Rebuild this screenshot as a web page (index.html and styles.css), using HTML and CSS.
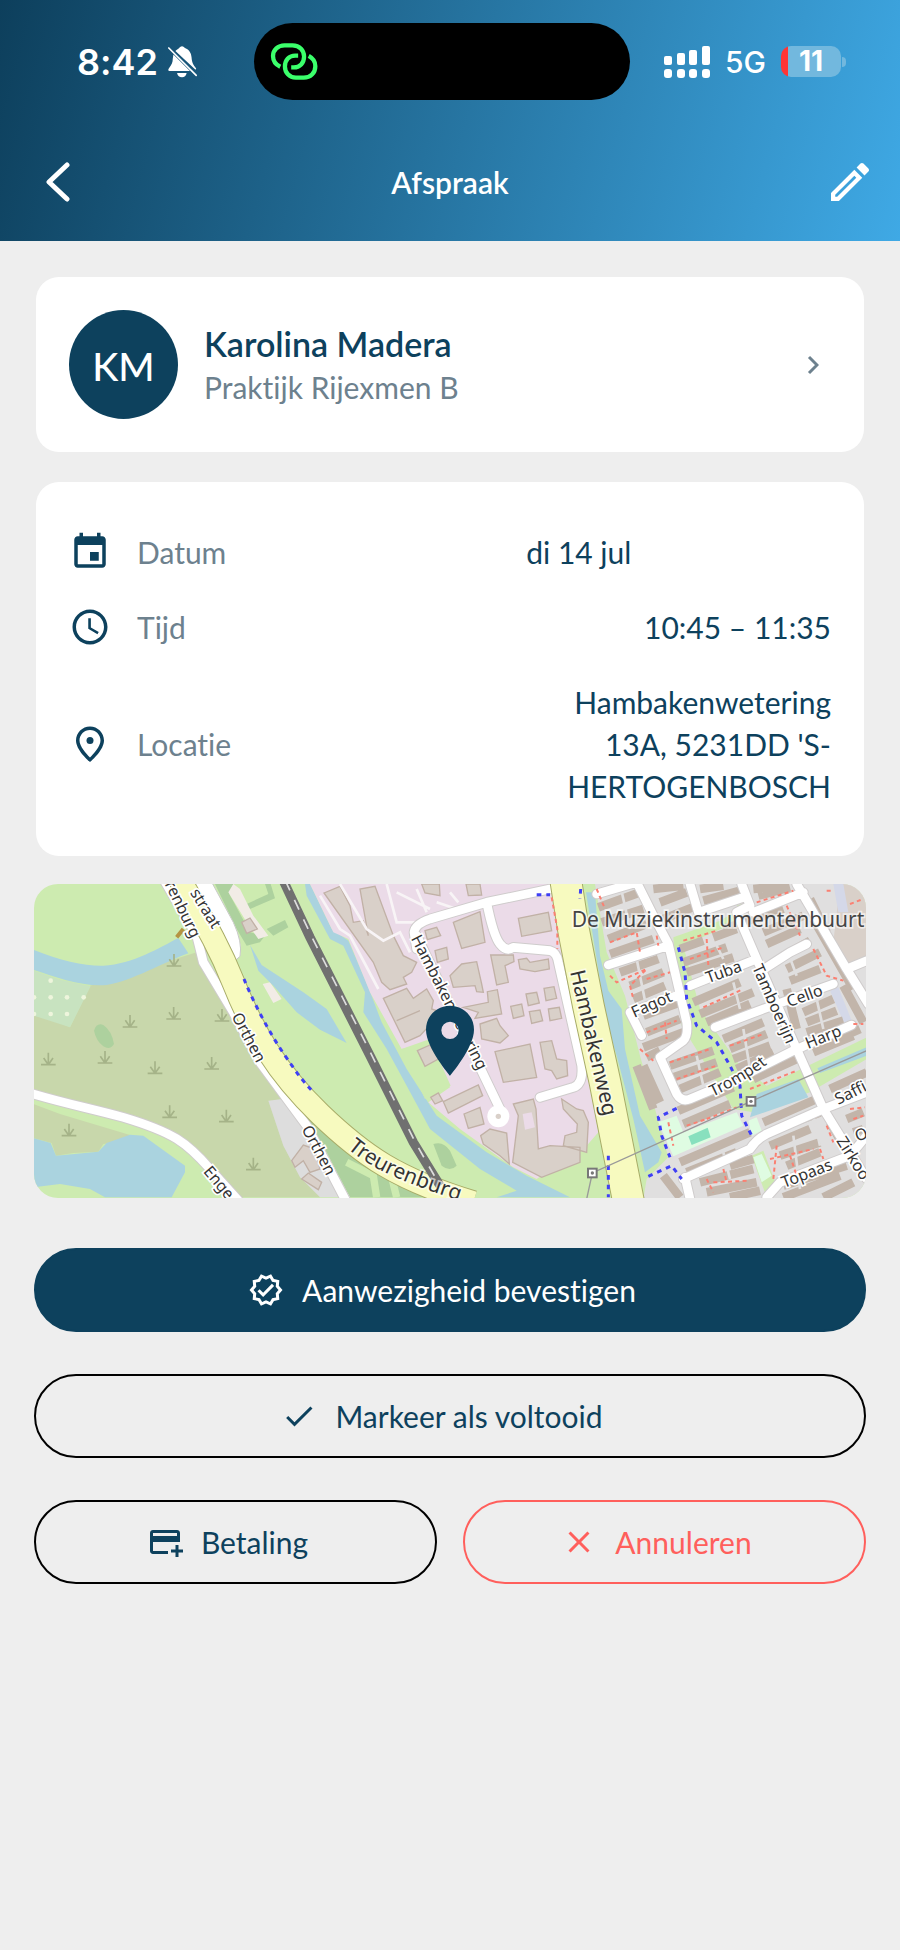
FILE: index.html
```html
<!DOCTYPE html>
<html lang="nl">
<head>
    <meta charset="UTF-8">
    <meta name="viewport" content="width=device-width, initial-scale=1.0">
    <title>Afspraak</title>
    <link rel="stylesheet" href="styles.css">
</head>
<body>
    <header class="header">
        <div class="status-bar">
            <div class="status-left">
                <span class="time">8:42</span>
                <svg class="bell" viewBox="500 134 93 100" fill="#fff">
                    <path d="M525 152C530 147 534 146 536 143Q545 132 554 143C567 148 573 158 574 172C575 186 578 193 588 205L586 209Z"/>
                    <path d="M519 163L569 213H507Q501 212 505 205C514 194 517 187 517 176Z"/>
                    <path d="M530 219H559Q556 232 545 232Q533 232 530 219Z"/>
                    <path d="M505 143L588 226" stroke="#fff" stroke-width="5" stroke-linecap="round"/>
                </svg>
            </div>
            <div class="island">
                <svg class="hotspot" viewBox="812 126 148 118" fill="none" stroke="#3bff6b" stroke-width="13">
                    <path d="M843 201C827 193 821 182 821 168C821 150 836 136 856 136H880C902 136 915 152 915 170C915 190 902 203 884 203H876"/>
                    <path d="M929 168C942 175 949 186 949 199C949 220 934 234 914 234H890C870 234 857 218 857 200C857 180 870 167 888 167H897"/>
                </svg>
            </div>
            <div class="status-right">
                <svg class="signal" viewBox="0 0 46 32" fill="#fff">
                    <rect x="0" y="10" width="8" height="9" rx="2"/><rect x="0" y="23" width="8" height="9" rx="3"/>
                    <rect x="13" y="7" width="8" height="12" rx="2"/><rect x="13" y="23" width="8" height="9" rx="3"/>
                    <rect x="25" y="4" width="8" height="15" rx="2"/><rect x="25" y="23" width="8" height="9" rx="3"/>
                    <rect x="38" y="0" width="8" height="19" rx="2"/><rect x="38" y="23" width="8" height="9" rx="3"/>
                </svg>
                <span class="network">5G</span>
                <div class="battery-wrap">
                    <span class="battery">11</span>
                    <span class="battery-tip"></span>
                </div>
            </div>
        </div>
        <nav class="nav-bar">
            <button class="icon-button" aria-label="Terug">
                <svg class="back-icon" viewBox="0 0 24 40" fill="none" stroke="#fff" stroke-width="5" stroke-linecap="round" stroke-linejoin="round">
                    <path d="M21 3L3 20L21 37"/>
                </svg>
            </button>
            <h1>Afspraak</h1>
            <button class="icon-button" aria-label="Bewerken">
                <svg class="edit-icon" viewBox="3 3 18 18" fill="#fff">
                    <path d="M14.06 9.02l.92.92L5.92 19H5v-.92l9.06-9.06M17.66 3c-.25 0-.51.1-.7.29l-1.83 1.83 3.75 3.75 1.83-1.83c.39-.39.39-1.02 0-1.41l-2.34-2.34c-.2-.2-.45-.29-.71-.29zm-3.6 3.19L3 17.25V21h3.75L17.81 9.94l-3.75-3.75z"/>
                </svg>
            </button>
        </nav>
    </header>

    <main class="content">
        <a class="card person" href="#">
            <span class="avatar">KM</span>
            <span class="person-text">
                <span class="person-name">Karolina Madera</span>
                <span class="person-type">Praktijk Rijexmen B</span>
            </span>
            <svg class="chevron" viewBox="0 0 12 20" fill="none" stroke="#6d818e" stroke-width="3">
                <path d="M2 2L10 10L2 18"/>
            </svg>
        </a>

        <dl class="card details">
            <div class="detail-row">
                <dt>
                    <svg class="detail-icon" viewBox="0 0 24 24"><path d="M19 3h-1V1h-2v2H8V1H6v2H5c-1.11 0-1.99.9-1.99 2L3 19c0 1.1.89 2 2 2h14c1.1 0 2-.9 2-2V5c0-1.1-.9-2-2-2zm0 16H5V8h14v11zM12 12h5v5h-5z"/></svg>
                    Datum
                </dt>
                <dd class="value-start">di 14 jul</dd>
            </div>
            <div class="detail-row">
                <dt>
                    <svg class="detail-icon" viewBox="0 0 24 24"><path d="M11.99 2C6.47 2 2 6.48 2 12s4.47 10 9.99 10C17.52 22 22 17.52 22 12S17.52 2 11.99 2zM12 20c-4.42 0-8-3.58-8-8s3.58-8 8-8 8 3.58 8 8-3.58 8-8 8zm.5-13H11v6l5.25 3.15.75-1.23-4.5-2.67z"/></svg>
                    Tijd
                </dt>
                <dd>10:45 – 11:35</dd>
            </div>
            <div class="detail-row">
                <dt>
                    <svg class="detail-icon" viewBox="0 0 24 24"><path d="M12 2C7.6 2 4 5.6 4 10c0 5.4 7.05 11.5 7.35 11.76L12 22.3l.65-.54C12.95 21.5 20 15.4 20 10c0-4.4-3.6-8-8-8zm0 17.65c-2.13-2-6-6.31-6-9.65 0-3.31 2.69-6 6-6s6 2.69 6 6c0 3.34-3.87 7.66-6 9.65z"/><circle cx="12" cy="10" r="2"/></svg>
                    Locatie
                </dt>
                <dd>Hambakenwetering 13A, 5231DD 'S-HERTOGENBOSCH</dd>
            </div>
        </dl>

        <div class="map-box">
            <svg class="map" viewBox="42 45 2496 942" preserveAspectRatio="xMidYMid slice">
                <defs>
                    <g id="grass" fill="none" stroke="#a5b388" stroke-width="5">
                        <path d="M-22 16H22M0 16V-20M0 16L-14 -4M0 16L14 -4"/>
                    </g>
                    <g id="tower">
                        <rect x="-13" y="-13" width="26" height="26" fill="#fff" stroke="#777" stroke-width="6"/>
                        <circle r="5" fill="#777"/>
                    </g>
                    <g id="streets">
                        <path d="M1730 75L1850 40L1900 140L1945 225L2000 460Q2005 500 1990 515L1920 565L1970 675Q1985 700 2010 690L2130 640L2320 545L2495 468M1765 288L1945 230M2010 45L2035 130L2170 85M2165 45L2190 110L2150 130L2210 270L2330 540L2410 720L2540 930M2200 130L2350 70M2330 45L2480 300L2545 405M2480 300L2540 275M2010 350L2210 270M2240 295L2310 250L2360 225M2085 475L2230 420L2440 345M1830 430L1865 500M1830 430L1970 380M1990 930L2190 840Q2210 810 2240 795L2410 720L2540 670M1995 925L2010 990M2240 985L2280 940L2490 860L2540 800"/>
                        <path d="M1190 240L1182 190Q1185 165 1230 150L1400 100L1590 60M1400 100Q1420 200 1440 225T1480 235L1590 245Q1610 250 1615 280L1685 590Q1690 645 1660 655L1560 685M1190 200L1440 720"/>
                        <path d="M430 30L530 200L550 280L640 430L720 580L860 770L980 1000"/>
                        <path d="M30 672C140 705 200 715 310 745C460 790 500 820 570 900L660 1000"/>
                    </g>
                    <path id="treurenburg" d="M982 838C1080 920 1190 950 1360 1010"/>
                    <path id="trompet" d="M2078 683Q2190 630 2260 570"/>
                </defs>
                <rect x="0" y="0" width="2600" height="1100" fill="#cdebb0"/>

                <!-- heath and orchard -->
                <path fill="#c8d7ab" d="M42 430L150 475L210 350L530 250L640 430L740 600L860 770L900 985H640L560 890L440 790L310 745L42 670Z"/>
                <path fill="#c8d7ab" d="M42 706L120 735L330 798L290 820L250 825L235 848L160 852L108 860L95 822L42 808Z"/>
                <path fill="#c8e3c0" d="M42 305L120 332L212 352L150 475L42 440Z"/>
                <g fill="#eef5dc">
                    <circle cx="92" cy="335" r="7"/><circle cx="42" cy="385" r="7"/><circle cx="92" cy="385" r="7"/><circle cx="141" cy="385" r="7"/>
                    <circle cx="191" cy="385" r="7"/><circle cx="42" cy="435" r="7"/><circle cx="92" cy="435" r="7"/><circle cx="141" cy="435" r="7"/>
                </g>
                <path fill="#add19e" d="M222 485Q230 460 250 468Q275 485 282 525Q270 545 250 532Q228 515 222 485Z"/>
                <path fill="#add19e" d="M585 45H640L628 75L690 190L735 200L720 220L680 230L650 180ZM680 105L745 75L735 45H752L765 88L690 120ZM740 180L795 153L805 175L760 200Z"/>
                <path fill="#add19e" d="M835 710L900 770L1010 850L1130 900L1230 940L1270 985H990L920 850ZM1240 825Q1270 815 1290 845L1310 890Q1290 910 1265 890Z"/>
                <path fill="none" stroke="#cdebb0" stroke-width="22" d="M980 880L1060 920L1070 985M1110 905L1130 985"/>
                <path fill="#f2ece6" d="M640 45L625 70L680 160L715 210L745 200L700 140L660 60ZM728 345L750 340L785 390L760 402Z"/>
                <path fill="#ddd" d="M745 695L805 688L850 780L920 860L990 985H900L840 925L790 830Z"/>

                <!-- water -->
                <g fill="#aad3df">
                    <path d="M42 243C120 275 200 292 250 290C340 285 420 235 475 207L505 253C430 280 340 335 260 348C190 355 110 325 42 303Z"/>
                    <path d="M42 808L92 822L108 860L235 848L260 822L330 797L370 800L495 890V910L455 985H255L210 960L120 945L42 955Z"/>
                    <path d="M690 228L725 288L850 370L920 420L980 522L900 482L830 430L760 350L715 305Z"/>
                    <path d="M855 45H870L935 180L985 215L1045 355L1085 460L1160 600L1250 740L1400 850L1520 920L1650 985H1430L1490 965L1380 900L1230 780L1160 650L1100 540L1030 430L1035 370L970 230L930 210L860 80Z"/>
                </g>

                <!-- industrial area -->
                <path fill="#ebdbe8" d="M870 45H1600L1735 790L1700 830L1550 930L1480 895L1320 780L1225 700L1290 655L1225 520L1145 540L1050 370L985 210L940 190Z"/>
                <path fill="#cdebb0" d="M1145 540L1230 510L1292 650L1215 690Z"/>
                <g fill="#d9d0c9" stroke="#c1b1a6" stroke-width="4">
                    <path d="M912 72L960 52L990 110L1000 160L1030 155L1045 200L1020 60L1065 52L1120 200L1150 260L1190 280L1175 310L1150 325L1160 345L1110 362L1085 340L1060 280Z"/>
                    <path d="M1090 388L1160 358L1180 388L1220 360L1240 395L1235 420L1265 430L1200 500L1155 520Z"/>
                    <path d="M1130 455L1200 425M1205 45H1258L1260 80L1215 72ZM1338 45H1380L1385 78L1345 80Z"/>
                    <path d="M1215 185L1250 175L1262 200L1222 212ZM1245 245L1280 235L1285 270L1252 280ZM1300 160L1380 128L1395 220L1325 238ZM1495 148L1585 130L1595 185L1505 202Z"/>
                    <path d="M1290 320L1325 285L1370 278L1385 345L1390 370L1370 368L1365 350L1300 355ZM1412 258H1480L1482 278L1455 290L1465 340L1430 348ZM1495 272L1520 268L1530 280L1585 270L1588 300L1545 308L1500 300Z"/>
                    <path d="M1330 415L1405 400L1402 368L1432 362L1445 435L1365 448L1375 430ZM1380 465L1430 448L1440 470L1465 500L1440 522L1385 510ZM1425 548L1530 525L1550 625L1450 640ZM1560 520L1595 515L1610 570L1640 575L1643 620L1610 630L1595 605L1575 600Z"/>
                    <path d="M1472 412L1505 405L1512 440L1480 448ZM1518 375L1550 370L1558 402L1525 410ZM1572 358L1602 353L1610 388L1578 395ZM1528 428L1560 423L1568 455L1535 463ZM1585 420L1618 415L1625 448L1590 455Z"/>
                    <path d="M1192 545L1230 528L1255 570L1215 592ZM1232 685L1255 672L1268 695L1245 705ZM1270 698L1375 648L1388 680L1285 732ZM1332 735L1380 715L1392 765L1345 778ZM1382 800L1410 780L1460 792L1468 885L1440 860L1390 825Z"/>
                    <path d="M1480 705L1540 690L1548 720L1555 840L1590 830L1680 835V880L1565 925L1478 880L1495 740ZM1625 690L1670 720L1690 725L1705 760L1700 850L1630 830L1635 800L1670 790L1672 765L1630 720Z"/>
                    <path d="M815 875L850 828L885 840L900 900L870 910L850 875L825 895ZM845 930L865 912L905 940L895 962Z"/>
                    <path d="M665 160L690 147L712 180L680 193Z"/>
                </g>
                <path fill="#ebdbe8" d="M1508 735L1535 730L1545 775L1515 782Z"/>
                <path class="path-thin" d="M900 80L960 180L990 200L1075 360M960 45L1040 180L1090 215L1140 190L1170 250M1100 45L1130 160L1210 160M1130 70L1230 120M1190 60L1220 130M1250 100L1310 120M1290 70L1315 100"/>

                <!-- residential area -->
                <path fill="#e0dfdf" d="M1725 45H2540V990H1870L1880 930L1945 865L1905 720L1860 560L1815 380L1760 250Z"/>
                <path fill="#aad3df" d="M1698 70H1725L1740 260L1765 365L1805 420L1815 540L1860 740L1925 850L1915 880L1875 910L1840 750L1790 560L1760 460Z"/>
                <path fill="#d9d0c9" d="M2460 45H2540V270L2475 300L2440 220Z"/>
                <path fill="#d4d8e8" d="M2440 45H2470L2485 130H2455ZM2430 365L2455 355L2495 455L2475 468Z"/>
                <path fill="#cdebb0" d="M1960 205L2100 155L2150 125L2170 150L1990 230L2040 420L2160 590L2240 650L2540 505V570L2370 670L2200 730L2140 720L1985 470L1965 300ZM2150 110L2180 98L2190 125L2165 135ZM2195 860L2230 845L2270 950L2240 985Z"/>
                <path fill="#aad3df" d="M2210 675L2335 630L2365 685L2190 745ZM2392 598L2540 535V560L2400 612Z"/>
                <path fill="#dffce2" d="M1915 760L1970 740L1990 790L2150 730L2170 770L1960 862ZM2185 755L2210 745L2225 785L2195 800ZM2200 865L2225 855L2255 920L2225 940Z"/>
                <path fill="#88e0be" d="M2005 802L2063 776L2072 805L2015 828Z"/>

                <g class="terrace">
                    <path d="M1735 115L1860 70M1745 160L1870 120M1765 210L1880 165M1770 255L1900 210M1800 310L1915 270M1830 350L1930 310M1840 390L1935 350"/>
                    <path d="M1900 60L1990 50M1920 100L2000 70M1930 150L2030 110M1870 440L1980 400M1880 490L1980 450M1870 535L1990 490M1880 565L1920 545"/>
                    <path d="M2040 60L2110 50M2050 95L2160 65M2060 120L2170 80M2110 180L2290 120M2200 60L2300 50M2215 80L2310 55M2230 190L2350 140M2240 225L2340 180"/>
                    <path d="M1980 240L2050 215M2080 205L2150 180M1990 280L2120 235M2000 310L2140 265M2020 400L2160 340M2040 435L2200 370M2060 460L2190 405"/>
                    <path d="M2110 510L2230 460M2130 540L2240 495M2140 570L2250 530M2150 600L2260 550M2200 630L2330 570M1950 590L2080 545M1960 625L2090 580M1980 660L2100 610"/>
                    <path d="M1870 590L1920 700M1850 590L1900 720M1975 725L2140 655M1990 765L2130 705M1980 880L2190 790M2000 910L2150 850M2270 780L2400 730M2230 760L2390 690"/>
                    <path d="M2290 260L2370 215M2300 300L2400 250M2310 335L2400 300M2350 430L2440 390M2360 460L2450 425M2360 490L2470 455M2430 520L2520 480M2380 550L2500 500M2300 360L2330 480M2240 330L2300 480"/>
                    <path d="M2380 150L2500 360M2370 90L2420 190M2470 350L2530 460M2250 830L2370 780M2280 860L2400 820M2300 890L2400 850M2130 890L2200 870M2040 940L2200 900M2060 970L2210 940M2130 985L2220 965M1930 920L1980 985M2290 950L2480 890M2290 985L2460 920M2410 985L2500 940M2430 660L2540 610M2430 760L2470 830M2480 750L2530 730M2500 790L2530 780"/>
                </g>
                <path class="terrace-gap" d="M1800 45L1830 180M1850 270L1880 420M2010 50L2040 120M2090 230L2110 270M2140 340L2160 420M2170 480L2190 600M2030 560L2050 650M2300 240L2330 320M2390 390L2410 480M2380 740L2400 830M2110 850L2130 930M2320 800L2340 960"/>

                <use class="street-case" href="#streets"/>
                <use class="street" href="#streets"/>
                <circle cx="1435" cy="742" r="33" fill="#fff"/>
                <circle cx="1435" cy="742" r="8" fill="#d9d0c9"/>
                <path fill="#fff" stroke="#c9c9c9" stroke-width="3" d="M500 30H570L640 160Q668 220 660 262L645 275L600 200Z"/>

                <!-- main roads -->
                <path class="road-case" d="M468 10C520 110 580 190 640 340S770 610 900 735S1130 930 1360 1000"/>
                <path class="road" d="M468 10C520 110 580 190 640 340S770 610 900 735S1130 930 1360 1000"/>
                <path class="avenue-case" d="M1632 0L1660 180L1705 410L1755 640L1830 1020"/>
                <path class="avenue" d="M1632 0L1660 180L1705 410L1755 640L1830 1020"/>
                <path fill="none" stroke="#b59442" stroke-width="12" d="M470 205L490 180"/>

                <!-- railway -->
                <path fill="none" stroke="#707070" stroke-width="28" d="M790 35L870 205L1050 560L1180 820L1260 950"/>
                <path fill="none" stroke="#ddd" stroke-width="5" stroke-dasharray="32 32" d="M796 35L876 205L1056 560L1186 820L1260 950"/>

                <!-- cycle and foot paths -->
                <path class="cycle" d="M672 330C700 400 750 495 795 560S840 625 880 670"/>
                <path class="cycle" d="M1975 235L1995 310L2000 390L2030 470L2090 520L2130 590L2160 650L2165 740L2200 810M1970 718L1915 745L1925 800L1950 865M1885 922L1955 890L1985 930M1765 860V985M1550 77H1590M1682 60L1680 90"/>
                <path class="foot" d="M1595 85L1612 180L1612 240M1730 60L1755 120M1770 220L1850 190L1860 250M1910 200L1915 230M1770 320L1790 340L1880 300L1830 350L1840 390M1880 330L1950 310M1990 215L2090 185M2010 270L2110 235M2060 210L2065 290M2050 415L2170 360M2130 530L2230 495M1880 490L1970 455M1935 460L1940 510M1860 540L1900 575M1950 580L2070 540M1970 630L2090 590M2210 100L2320 65M2300 110L2340 200M2380 240L2420 320L2470 335M2190 660L2330 605M2060 750L2150 715M1945 760L1960 830M2000 770L2060 750M2080 940L2190 935M2110 900L2120 940M2270 830L2260 930M2250 870L2380 840M2310 860L2330 920M2400 840L2410 870M2060 930L2080 970M2490 105L2530 90M2420 65H2440M2500 465H2530M2490 720L2535 715M2500 750L2530 740M2420 770L2440 820"/>

                <path fill="none" stroke="#999" stroke-width="4" d="M1700 990L1717 912L2193 697L2540 545"/>
                <use href="#tower" x="1717" y="912"/>
                <use href="#tower" x="2193" y="697"/>

                <use href="#grass" x="462" y="275"/>
                <use href="#grass" x="330" y="458"/>
                <use href="#grass" x="461" y="434"/>
                <use href="#grass" x="606" y="440"/>
                <use href="#grass" x="85" y="571"/>
                <use href="#grass" x="255" y="566"/>
                <use href="#grass" x="405" y="597"/>
                <use href="#grass" x="575" y="584"/>
                <use href="#grass" x="449" y="729"/>
                <use href="#grass" x="619" y="742"/>
                <use href="#grass" x="147" y="784"/>
                <use href="#grass" x="700" y="886"/>

                <g class="map-label">
                    <text transform="translate(514 210) rotate(64)" text-anchor="end">renburg</text>
                    <text transform="translate(578 182) rotate(58)" text-anchor="end">straat</text>
                    <text transform="translate(634 442) rotate(62)">Orthen</text>
                    <text transform="translate(844 780) rotate(62)">Orthen</text>
                    <text transform="translate(548 908) rotate(50)">Enge</text>
                    <text transform="translate(1172 208) rotate(63)">Hambakenwetering</text>
                    <text transform="translate(2065 343) rotate(-20)">Tuba</text>
                    <text transform="translate(2307 415) rotate(-20)">Cello</text>
                    <text transform="translate(2364 540) rotate(-22)">Harp</text>
                    <text transform="translate(1843 447) rotate(-24)">Fagot</text>
                    <text transform="translate(2196 295) rotate(66)">Tamboerijn</text>
                    <text transform="translate(2455 708) rotate(-27)">Saffi</text>
                    <text transform="translate(2292 957) rotate(-21)">Topaas</text>
                    <text transform="translate(2448 815) rotate(58)">Zirkoo</text>
                    <text transform="translate(2512 818) rotate(-20)">O</text>
                    <text><textPath href="#trompet">Trompet</textPath></text>
                </g>
                <g class="map-label-large">
                    <text><textPath href="#treurenburg">Treurenburg</textPath></text>
                    <text transform="translate(1650 308) rotate(77)">Hambakenweg</text>
                    <text class="district" x="1655" y="175">De Muziekinstrumentenbuurt</text>
                </g>

                <path fill="#0d415d" fill-rule="evenodd" d="M1290 410C1249 410 1218 442 1218 482C1218 536 1290 620 1290 620S1362 536 1362 482C1362 442 1331 410 1290 410ZM1290 458A26 26 0 1 1 1290 510A26 26 0 1 1 1290 458Z"/>
            </svg>
        </div>

        <div class="actions">
            <button class="btn btn-primary">
                <svg class="btn-icon" viewBox="0 0 24 24"><path d="M23 11.99l-2.44-2.79.34-3.69-3.61-.82L15.4 1.5 12 2.96 8.6 1.5 6.71 4.69 3.1 5.5l.34 3.7L1 11.99l2.44 2.79-.34 3.7 3.61.82 1.89 3.2 3.4-1.47 3.4 1.46 1.89-3.19 3.61-.82-.34-3.69L23 11.99zm-3.95 1.48l-.56.65.08.85.18 1.95-1.9.43-.84.19-.44.74-.99 1.68-1.78-.77-.8-.34-.79.34-1.78.77-.99-1.67-.44-.74-.84-.19-1.9-.43.18-1.96.08-.85-.56-.65-1.29-1.47 1.29-1.48.56-.65-.09-.86-.18-1.94 1.9-.43.84-.19.44-.74.99-1.68 1.78.77.8.34.79-.34 1.78-.77.99 1.68.44.74.84.19 1.9.43-.18 1.95-.08.85.56.65 1.29 1.47-1.28 1.48zM10.09 13.75l-2.32-2.33-1.48 1.49 3.8 3.81 7.34-7.36-1.48-1.49z"/></svg>
                Aanwezigheid bevestigen
            </button>
            <button class="btn">
                <svg class="btn-icon" viewBox="0 0 24 24"><path d="M9 16.17L4.83 12l-1.42 1.41L9 19 21 7l-1.41-1.41z"/></svg>
                Markeer als voltooid
            </button>
            <div class="btn-row">
                <button class="btn">
                    <svg class="btn-icon" viewBox="0 0 24 24"><path d="M20 4H4c-1.11 0-1.99.89-1.99 2L2 18c0 1.11.89 2 2 2h10v-2H4v-6h18V6c0-1.11-.89-2-2-2zm0 4H4V6h16v2zm4 9v2h-3v3h-2v-3h-3v-2h3v-3h2v3h3z"/></svg>
                    Betaling
                </button>
                <button class="btn btn-danger">
                    <svg class="btn-icon" viewBox="0 0 24 24"><path d="M19 6.41L17.59 5 12 10.59 6.41 5 5 6.41 10.59 12 5 17.59 6.41 19 12 13.41 17.59 19 19 17.59 13.41 12z"/></svg>
                    Annuleren
                </button>
            </div>
        </div>
    </main>
</body>
</html>
```
FILE: styles.css
```css
* {
    box-sizing: border-box;
}
body {
    margin: 0;
    min-height: 100vh;
    background-color: #eeeeee;
    color: #0d415d;
    font-family: Lato, sans-serif;
    font-size: 30px;
    font-variant-ligatures: none;
    line-height: 42px;
}
button {
    font: inherit;
    font-variant-ligatures: none;
    cursor: pointer;
}

/* header */
.header {
    background: linear-gradient(105deg, #0d3f5c, #3fa9e5);
    color: #ffffff;
    padding: 23px 31px;
}
.status-bar {
    display: grid;
    grid-template-columns: 1fr 376px 1fr;
    align-items: center;
    padding-right: 16px;
    font-family: Inter, sans-serif;
}
.status-left {
    display: flex;
    align-items: center;
    gap: 9px;
    padding-left: 46px;
}
.time {
    font-size: 36px;
    font-weight: 600;
}
.bell {
    width: 31px;
    height: 33px;
}
.island {
    display: flex;
    align-items: center;
    height: 77px;
    padding-left: 16px;
    border-radius: 39px;
    background-color: #000000;
}
.hotspot {
    width: 49px;
    height: 39px;
}
.status-right {
    display: flex;
    align-items: center;
    justify-content: flex-end;
    gap: 15px;
    padding-right: 7px;
}
.signal {
    width: 46px;
    height: 32px;
}
.network {
    font-weight: 500;
}
.battery-wrap {
    display: flex;
    align-items: center;
    gap: 1px;
}
.battery {
    width: 60px;
    height: 31px;
    border-radius: 10px;
    background: linear-gradient(90deg, #ff3535 7px, #72b8de 7px);
    font-size: 28px;
    font-weight: 700;
    line-height: 31px;
    text-align: center;
}
.battery-tip {
    width: 4px;
    height: 10px;
    border-radius: 0 4px 4px 0;
    background-color: #72b8de;
}
.nav-bar {
    display: flex;
    align-items: center;
    justify-content: space-between;
    margin-top: 46px;
}
.nav-bar h1 {
    margin: 0;
    font-size: 30px;
    font-weight: 600;
}
.icon-button {
    display: flex;
    align-items: center;
    justify-content: center;
    width: 54px;
    height: 72px;
    padding: 0;
    border: none;
    background: none;
}
.icon-button:first-child {
    justify-content: flex-start;
    padding-left: 15px;
}
.icon-button:last-child {
    justify-content: flex-end;
}
.back-icon {
    width: 24px;
    height: 40px;
}
.edit-icon {
    width: 38px;
    height: 38px;
}

/* cards */
.content {
    padding: 36px 34px;
}
.card {
    margin: 0 2px;
    padding: 33px;
    border-radius: 23px;
    background-color: #ffffff;
}
.person {
    display: flex;
    align-items: center;
    gap: 26px;
    color: inherit;
    text-decoration: none;
}
.avatar {
    width: 109px;
    height: 109px;
    border-radius: 50%;
    background-color: #0d415d;
    color: #ffffff;
    font-size: 39px;
    font-weight: 500;
    line-height: 112px;
    text-align: center;
}
.person-text {
    display: flex;
    flex: 1;
    flex-direction: column;
}
.person-name {
    font-size: 34px;
    font-weight: 600;
    line-height: 44px;
}
.person-type {
    color: #6d818e;
}
.chevron {
    width: 12px;
    height: 20px;
    margin-right: 12px;
}
.details {
    display: flex;
    flex-direction: column;
    gap: 33px;
    margin-top: 30px;
    padding: 49px 33px;
}
.detail-row {
    display: flex;
    align-items: center;
    justify-content: space-between;
}
.detail-row dt {
    display: flex;
    align-items: center;
    gap: 26px;
    color: #6d818e;
}
.detail-row dd {
    width: 40%;
    margin: 0;
    text-align: right;
}
.detail-row .value-start {
    text-align: left;
}
.detail-icon {
    width: 42px;
    height: 42px;
    fill: #0d415d;
}

/* map */
.map-box {
    margin-top: 28px;
    border-radius: 24px;
    overflow: hidden;
}
.map {
    display: block;
    width: 100%;
    height: 314px;
}
.map-label {
    font-family: "Noto Sans", sans-serif;
    font-size: 48px;
    fill: #333333;
    stroke: #ffffff;
    stroke-width: 10px;
    paint-order: stroke;
}
.map-label-large {
    font-family: "Noto Sans", sans-serif;
    font-size: 63px;
    fill: #333333;
    stroke: #ffffff;
    stroke-width: 10px;
    stroke-opacity: 0.6;
    paint-order: stroke;
}
.district {
    fill: #444444;
}
.street, .street-case {
    fill: none;
    stroke: #ffffff;
    stroke-width: 26px;
    stroke-linecap: round;
    stroke-linejoin: round;
}
.street-case {
    stroke: #cfcccc;
    stroke-width: 32px;
}
.road, .road-case {
    fill: none;
    stroke: #f7fabf;
    stroke-width: 66px;
}
.road-case {
    stroke: #a8ac68;
    stroke-width: 72px;
}
.avenue, .avenue-case {
    fill: none;
    stroke: #f7fabf;
    stroke-width: 92px;
}
.avenue-case {
    stroke: #a8ac68;
    stroke-width: 98px;
}
.terrace {
    fill: none;
    stroke: #c2b5aa;
    stroke-width: 26px;
}
.terrace-gap {
    fill: none;
    stroke: #e0dfdf;
    stroke-width: 8px;
}
.path-thin {
    fill: none;
    stroke: #f8f4f6;
    stroke-width: 8px;
}
.cycle {
    fill: none;
    stroke: #3f3ff5;
    stroke-width: 9px;
    stroke-dasharray: 14 15;
}
.foot {
    fill: none;
    stroke: #fa8072;
    stroke-width: 6px;
    stroke-dasharray: 12 10;
}

/* buttons */
.actions {
    display: flex;
    flex-direction: column;
    gap: 42px;
    margin-top: 50px;
}
.btn-row {
    display: grid;
    grid-template-columns: 1fr 1fr;
    gap: 26px;
}
.btn {
    display: flex;
    align-items: center;
    justify-content: center;
    gap: 18px;
    height: 84px;
    padding: 0 32px 0 16px;
    border: 2px solid #000000;
    border-radius: 42px;
    background: none;
    color: #0d415d;
}
.btn-primary {
    border-color: #0d415d;
    background-color: #0d415d;
    color: #ffffff;
}
.btn-danger {
    border-color: #ff5f5c;
    color: #ff5f5c;
}
.btn-icon {
    width: 36px;
    height: 36px;
    fill: currentColor;
}
```
